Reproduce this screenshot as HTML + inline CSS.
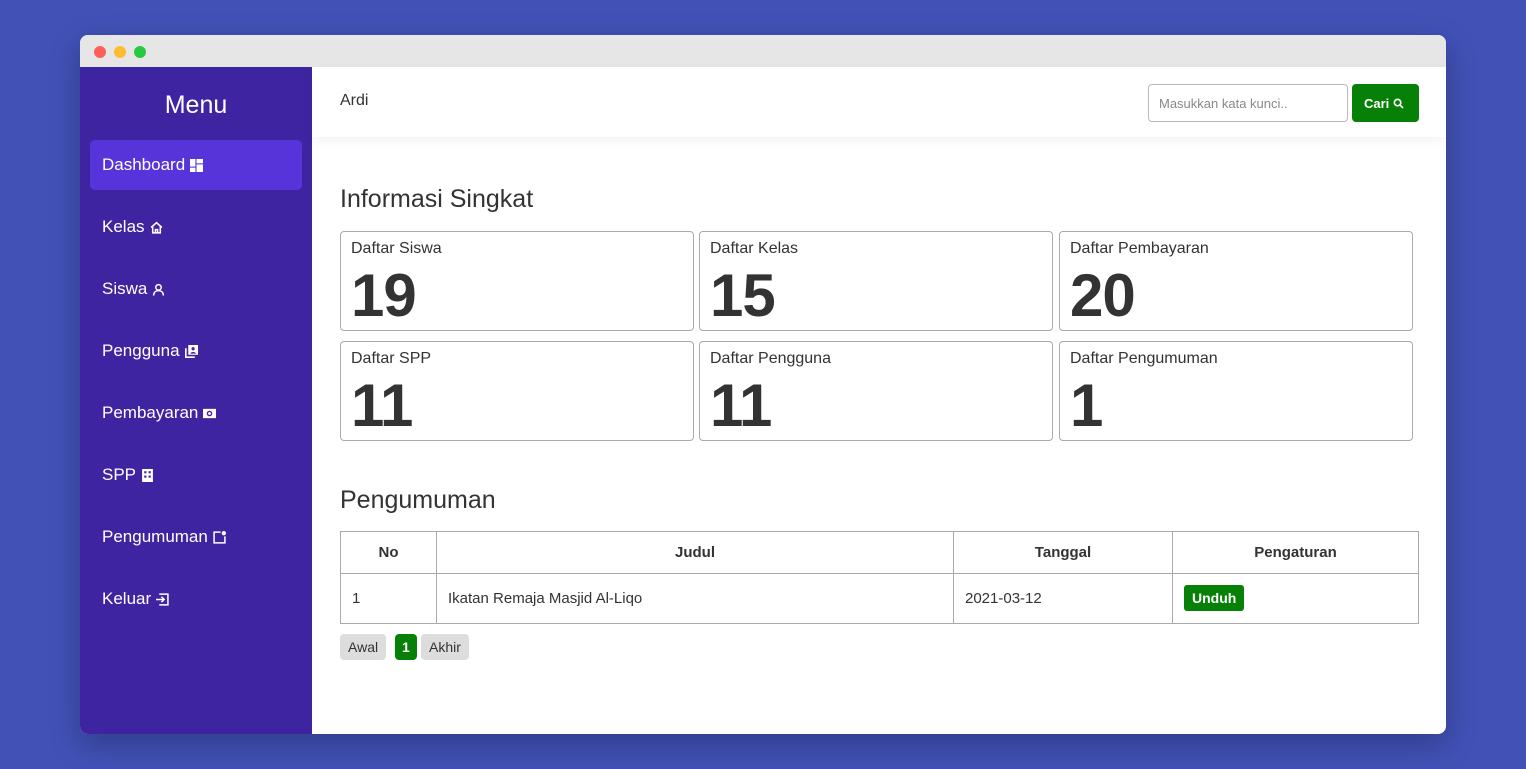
<!DOCTYPE html>
<html><head><style>
*{box-sizing:border-box;margin:0;padding:0}
body{width:1526px;height:769px;background:#4151b6;font-family:"Liberation Sans",sans-serif;position:relative;overflow:hidden;color:#333}
.win{position:absolute;left:80px;top:35px;width:1366px;height:699px;border-radius:8px;overflow:hidden;background:#fff;box-shadow:0 10px 30px rgba(0,0,0,.25)}
.bar{height:32px;background:#e6e6e6;position:relative}
.dot{position:absolute;top:11px;width:12px;height:12px;border-radius:50%}
.side{position:absolute;left:0;top:32px;width:232px;bottom:0;background:#3f24a1;color:#fff}
.side h1{font-weight:normal;font-size:25px;text-align:center;margin-top:24px;height:49px}
.item{position:absolute;left:10px;width:212px;height:50px;border-radius:5px;font-size:17px;padding:16px 12px;display:flex;align-items:center;gap:5px}
.item svg{width:13px;height:13px}
.main{position:absolute;left:232px;top:32px;right:0;bottom:0}
.top{height:70px;box-shadow:0 4px 10px rgba(0,0,0,.05);position:relative}
.user{position:absolute;left:28px;top:25px;font-size:16px}
.inp{position:absolute;left:836px;top:17px;width:200px;height:38px;border:1px solid #bbb;border-radius:4px;font-size:13px;color:#888;padding:11px 10px}
.btn{position:absolute;left:1040px;top:17px;width:67px;height:38px;background:#078008;border-radius:4px;color:#fff;font-size:13px;font-weight:bold;padding:11px 12px;white-space:nowrap;display:flex;align-items:center;gap:4px}
h2{position:absolute;left:28px;font-size:25px;font-weight:normal;color:#333}
.card{position:absolute;width:354px;height:100px;border:1px solid #aaa;border-radius:4px;padding:8px 10px}
.card .t{font-size:16px}
.card .n{font-size:60px;line-height:64px;font-weight:bold;color:#333;letter-spacing:-1px;margin-top:6px}
table{position:absolute;left:28px;top:464px;width:1079px;border-collapse:collapse;font-size:15px}
td,th{border:1px solid #aaa}
th{height:42px;font-weight:bold}
td{height:50px;padding-left:11px}
.pg{position:absolute;top:567px;height:26px;border-radius:4px;font-size:14px;padding:5px 8px;background:#ddd}
</style></head><body>
<div class="win">
<div class="bar"><div class="dot" style="left:14px;background:#fe5f57"></div><div class="dot" style="left:34px;background:#febc2e"></div><div class="dot" style="left:54px;background:#28c840"></div></div>
<div class="side"><h1>Menu</h1>
<div class="item" style="top:73px;background:#5634da">Dashboard <svg viewBox="0 0 12 12" fill="#fff"><rect x="0" y="0" width="5" height="7"/><rect x="6" y="0" width="6" height="4"/><rect x="0" y="8" width="5" height="4"/><rect x="6" y="5" width="6" height="7"/></svg></div>
<div class="item" style="top:135px">Kelas <svg viewBox="0 0 12 12" fill="none" stroke="#fff" stroke-width="1.4"><path d="M1 6L6 1.5 11 6M2.5 5v6h7V5M5 11V8h2v3"/></svg></div>
<div class="item" style="top:197px">Siswa <svg viewBox="0 0 12 12" fill="none" stroke="#fff" stroke-width="1.4"><circle cx="6" cy="4" r="2.5"/><path d="M1.5 11.5c0-3 2-4.5 4.5-4.5s4.5 1.5 4.5 4.5"/></svg></div>
<div class="item" style="top:259px">Pengguna <svg viewBox="0 0 12 12" fill="#fff"><path d="M3 0h9v9H3zM0 3h1.5v7.5H9V12H0z"/><circle cx="7.5" cy="3.5" r="1.5" fill="#3f24a1"/><path d="M5 8c0-2 5-2 5 0z" fill="#3f24a1"/></svg></div>
<div class="item" style="top:321px">Pembayaran <svg viewBox="0 0 14 12" fill="#fff"><rect x="0" y="1" width="14" height="10"/><circle cx="7" cy="6" r="3" fill="#3f24a1"/><circle cx="7" cy="6" r="1.5"/></svg></div>
<div class="item" style="top:383px">SPP <svg viewBox="0 0 12 12" fill="#fff"><path d="M1 0h10v12H1z"/><rect x="3" y="2" width="2" height="2" fill="#3f24a1"/><rect x="7" y="2" width="2" height="2" fill="#3f24a1"/><rect x="3" y="6" width="2" height="2" fill="#3f24a1"/><rect x="7" y="6" width="2" height="2" fill="#3f24a1"/></svg></div>
<div class="item" style="top:445px">Pengumuman <svg viewBox="0 0 12 12" fill="none" stroke="#fff" stroke-width="1.4"><path d="M7 1H1v10h10V5"/><circle cx="10" cy="2" r="1.3" fill="#fff"/></svg></div>
<div class="item" style="top:507px">Keluar <svg viewBox="0 0 12 12" fill="none" stroke="#fff" stroke-width="1.4"><path d="M3 1h8v10H3M0 6h7M5 3.5 7.5 6 5 8.5"/></svg></div>
</div>
<div class="main">
<div class="top"><div class="user">Ardi</div><div class="inp">Masukkan kata kunci..</div><div class="btn">Cari <svg width="11" height="11" viewBox="0 0 12 12" fill="none" stroke="#fff" stroke-width="1.8"><circle cx="5" cy="5" r="3.5"/><path d="M7.5 7.5 11 11"/></svg></div></div>
<h2 style="top:118px">Informasi Singkat</h2>
<div class="card" style="left:28px;top:164px"><div class="t">Daftar Siswa</div><div class="n">19</div></div>
<div class="card" style="left:387px;top:164px"><div class="t">Daftar Kelas</div><div class="n">15</div></div>
<div class="card" style="left:747px;top:164px"><div class="t">Daftar Pembayaran</div><div class="n">20</div></div>
<div class="card" style="left:28px;top:274px"><div class="t">Daftar SPP</div><div class="n">11</div></div>
<div class="card" style="left:387px;top:274px"><div class="t">Daftar Pengguna</div><div class="n">11</div></div>
<div class="card" style="left:747px;top:274px"><div class="t">Daftar Pengumuman</div><div class="n">1</div></div>
<h2 style="top:419px">Pengumuman</h2>
<table><tr><th style="width:96px">No</th><th style="width:517px">Judul</th><th style="width:219px">Tanggal</th><th>Pengaturan</th></tr>
<tr><td>1</td><td>Ikatan Remaja Masjid Al-Liqo</td><td>2021-03-12</td><td><span style="background:#078008;color:#fff;font-weight:bold;font-size:14px;padding:5px 8px;border-radius:3px">Unduh</span></td></tr></table>
<div class="pg" style="left:28px">Awal</div>
<div class="pg" style="left:83px;background:#078008;color:#fff;font-weight:bold;padding:5px 7px">1</div>
<div class="pg" style="left:109px">Akhir</div>
</div></div>
</body></html>
